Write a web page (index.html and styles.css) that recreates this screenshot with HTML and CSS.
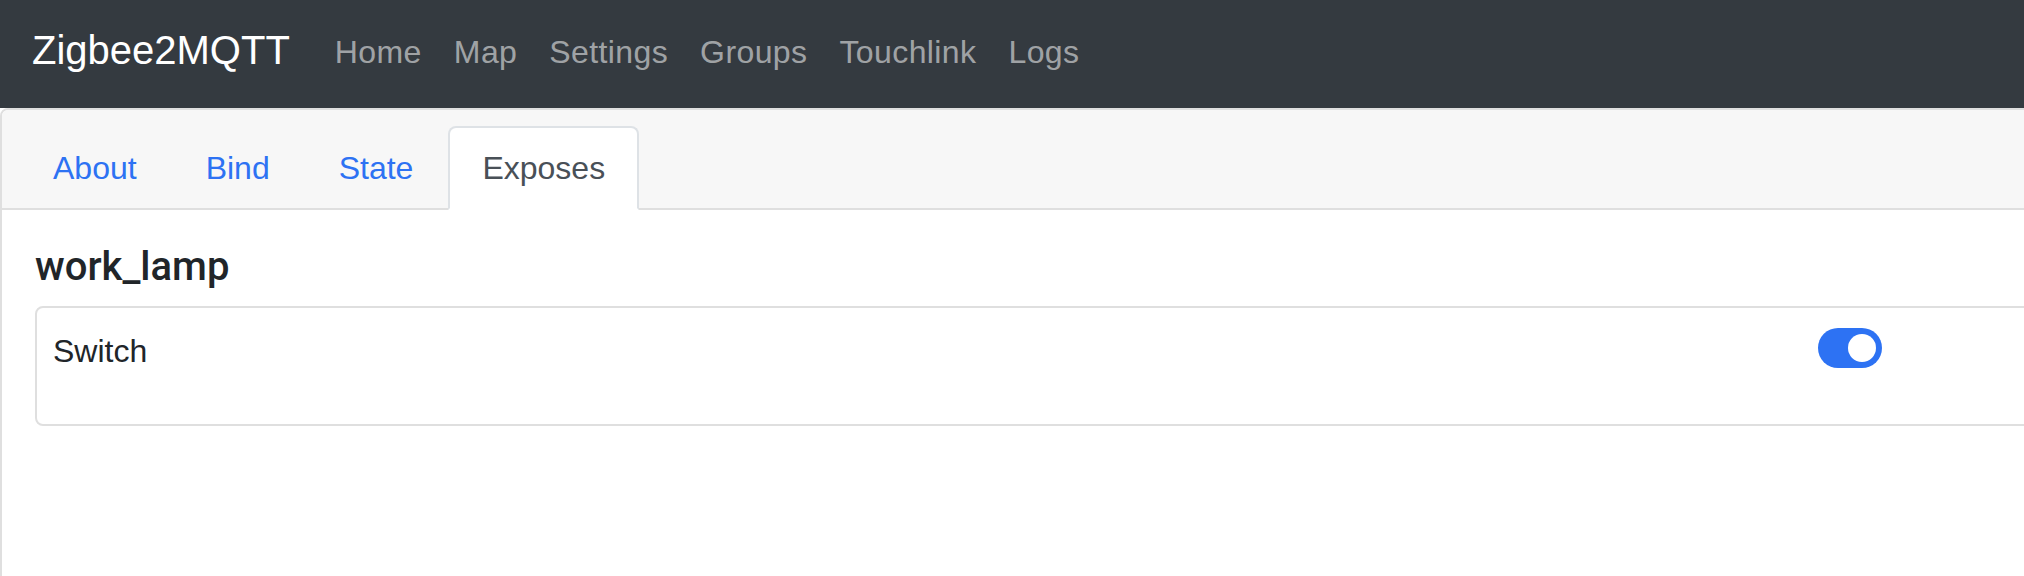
FILE: index.html
```html
<!DOCTYPE html>
<html lang="en">
<head>
<meta charset="utf-8">
<title>Zigbee2MQTT</title>
<link rel="stylesheet" href="styles.css">
</head>
<body>
<nav class="navbar">
  <a class="brand" href="#">Zigbee2MQTT</a>
  <ul class="nav-links">
    <li><a href="#">Home</a></li>
    <li><a href="#">Map</a></li>
    <li><a href="#">Settings</a></li>
    <li><a href="#">Groups</a></li>
    <li><a href="#">Touchlink</a></li>
    <li><a href="#">Logs</a></li>
  </ul>
</nav>
<main class="card">
  <div class="card-header">
    <ul class="tabs">
      <li><a class="tab" href="#">About</a></li>
      <li><a class="tab" href="#">Bind</a></li>
      <li><a class="tab" href="#">State</a></li>
      <li><a class="tab active" href="#">Exposes</a></li>
    </ul>
  </div>
  <div class="card-body">
    <h5 class="device-title">work_lamp</h5>
    <section class="expose-card">
      <div class="expose-row">
        <span class="expose-label">Switch</span>
        <span class="switch on" role="switch" aria-checked="true"><span class="knob"></span></span>
      </div>
    </section>
  </div>
</main>
</body>
</html>
```
FILE: styles.css
```css
html, body {
  margin: 0;
  padding: 0;
  overflow: hidden;
  background: #ffffff;
}
body {
  font-family: "Liberation Sans", Arial, sans-serif;
  color: #212529;
  height: 576px;
}
a { text-decoration: none; }
ul { list-style: none; margin: 0; padding: 0; }

.navbar {
  box-sizing: border-box;
  height: 108px;
  background: #343a40;
  display: flex;
  align-items: center;
  padding: 0 32px 8px;
}
.brand {
  color: #ffffff;
  font-size: 40px;
  line-height: 48px;
  margin-right: 29px;
}
.nav-links {
  display: flex;
  align-items: center;
}
.nav-links a {
  display: block;
  color: rgba(255, 255, 255, 0.55);
  font-size: 32px;
  line-height: 48px;
  letter-spacing: 0.4px;
  padding: 4px 16px 0;
}

.card {
  display: block;
  margin-right: -120px;
  min-height: 700px;
  border: 2px solid #dfdfdf;
  border-radius: 8px;
  background: #ffffff;
}
.card-header {
  background: #f7f7f7;
  border-bottom: 2px solid #dfdfdf;
  border-radius: 6px 6px 0 0;
  padding: 16px 0 0 17px;
}
.tabs {
  display: flex;
  gap: 1px;
  margin-bottom: -2px;
}
.tab {
  display: block;
  font-size: 32px;
  line-height: 48px;
  padding: 16px 32px;
  border: 2px solid transparent;
  border-radius: 8px 8px 0 0;
  color: #2d72f3;
}
.tab.active {
  color: #495057;
  background: #ffffff;
  border-color: #dee2e6 #dee2e6 #ffffff;
}

.card-body {
  padding: 33px 33px;
}
.device-title {
  margin: 0 0 15px;
  font-family: Roboto, "Liberation Sans", sans-serif;
  font-weight: 500;
  font-size: 40px;
  line-height: 48px;
  color: #212529;
}
.expose-card {
  border: 2px solid #dfdfdf;
  border-radius: 8px;
  padding: 19px 16px 49px;
}
.expose-row {
  display: grid;
  grid-template-columns: 1765px auto;
  align-items: start;
}
.expose-label {
  font-size: 32px;
  line-height: 48px;
  color: #212529;
}
.switch {
  box-sizing: border-box;
  margin-top: 1px;
  width: 64px;
  height: 40px;
  border-radius: 20px;
  background: #2d72f3;
  display: flex;
  align-items: center;
  justify-content: flex-end;
  padding: 0 6px;
}
.knob {
  width: 28px;
  height: 28px;
  border-radius: 50%;
  background: #ffffff;
}
```
